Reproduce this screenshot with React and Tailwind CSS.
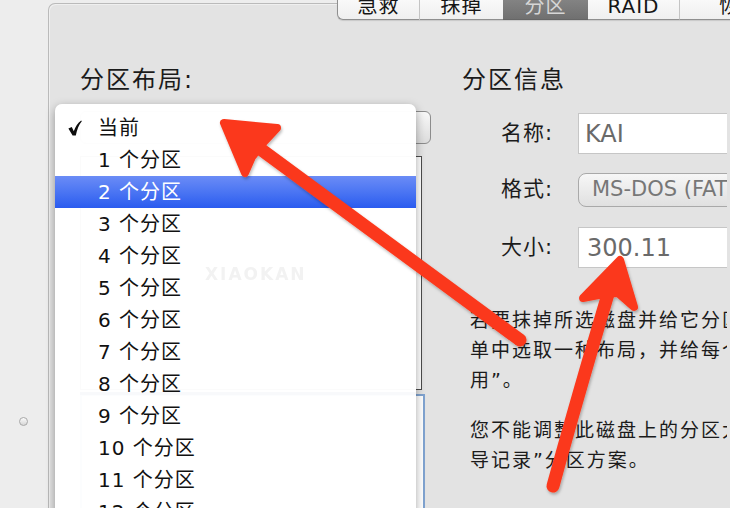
import React from 'react';

const FONT = "font-['DejaVu_Sans','Noto_Sans_CJK_SC',sans-serif]";

const ITEMS = ['当前', '1 个分区', '2 个分区', '3 个分区', '4 个分区', '5 个分区', '6 个分区', '7 个分区', '8 个分区', '9 个分区', '10 个分区', '11 个分区', '12 个分区'];

const TABS = [
    { label: '急救', w: 'w-[83px]' },
    { label: '抹掉', w: 'w-[83px]' },
    { label: '分区', w: 'w-[85px]', active: true },
    { label: 'RAID', w: 'w-[92px]' },
    { label: '恢复', w: 'w-[120px]' },
];

function Check() {
    return (
        <svg width="14" height="16" viewBox="0 0 14 16" className="shrink-0">
            <path d="M0.4 8.6 L3.8 7 L5.8 11.2 C7.4 6.4 9.8 2.8 13.2 0.4 L13.8 1.3 C11 4.6 9 9.6 7.8 15.4 L4.6 15.4 Z" fill="#0d0d0d" />
        </svg>
    );
}

function Arrows() {
    return (
        <svg width="730" height="508" viewBox="0 0 730 508" className="absolute left-0 top-0 pointer-events-none">
            <defs>
                <filter id="sh" x="-10%" y="-10%" width="120%" height="120%">
                    <feDropShadow dx="1" dy="2" stdDeviation="1.5" floodColor="#000" floodOpacity="0.28" />
                </filter>
            </defs>
            <g filter="url(#sh)" fill="#fb391c" stroke="#fb391c" strokeLinejoin="round" strokeLinecap="round">
                {/* arrow to 当前 */}
                <line x1="520" y1="340" x2="240" y2="134" strokeWidth="13" />
                <polygon points="224,123 277,128 263,143 252,157 245,173" strokeWidth="8" />
                {/* arrow to 300.11 */}
                <path d="M553 486 Q 578 395 611 284" fill="none" strokeWidth="13" />
                <polygon points="620,260 634,307 618,293 604,294 583,298" strokeWidth="8" />
            </g>
        </svg>
    );
}

export default function App() {
    return (
        <div className={`relative w-[730px] h-[508px] overflow-hidden bg-[#ededed] text-[#1b1b1b] ${FONT}`}>
            <div className="flex h-full">
                {/* left strip */}
                <div className="w-[48px] shrink-0 flex flex-col items-center pt-[417px]">
                    <div className="-ml-[2px] w-[9px] h-[9px] rounded-full border border-[#a8a8a8] bg-gradient-to-b from-[#fbfbfb] to-[#d6d6d6]" />
                </div>

                {/* main panel */}
                <div className="flex-1 mt-[3px] border-l border-t border-[#bababa] rounded-tl-[7px] bg-[#e3e3e3] shadow-[inset_1px_1px_0_#efefef]">
                    {/* tabs */}
                    <div className="flex ml-[288px] -mt-[16px] h-[32px] shadow-[0_1px_1px_rgba(0,0,0,0.12)] rounded-bl-[6px] w-max">
                        {TABS.map((t, i) => (
                            <div key={t.label}
                                className={`${t.w} h-full flex items-center justify-center pt-[4px] text-[20px] tracking-[1px] border-y border-[#8f8f8f] ${i === 0 ? 'border-l rounded-bl-[6px]' : ''} ${i < TABS.length - 1 && !t.active && !TABS[i + 1].active ? 'border-r border-r-[#c4c4c4]' : ''} ${t.active ? 'bg-gradient-to-b from-[#8e8e8e] to-[#707070] text-[#d6d6d6] border-[#666]' : 'bg-gradient-to-b from-[#ffffff] to-[#efefef] text-[#151515]'}`}>
                                {t.label}
                            </div>
                        ))}
                    </div>

                    <div className="flex mt-[45px]">
                        {/* left column */}
                        <div className="w-[382px] pl-[31px] flex flex-col">
                            <div className="text-[24px] leading-[30px] tracking-[2px] h-[30px]">分区布局:</div>
                            <div className="mt-[16px] h-[33px] rounded-[6px] border border-[#8c8c8c] bg-gradient-to-b from-[#f8f8f8] to-[#dcdcdc]" />
                            <div className="mt-[12px] h-[234px] w-[342px] border border-[#4d4d4d] bg-white" />
                            <div className="mt-[4px] h-[120px] w-[345px] border-2 border-[#7fa3d0] bg-white" />
                        </div>

                        {/* right column */}
                        <div className="ml-[31px] w-[265px] overflow-hidden flex flex-col">
                            <div className="text-[24px] leading-[30px] tracking-[2px] h-[30px]">分区信息</div>

                            <div className="mt-[18px] flex items-center h-[41px]">
                                <div className="w-[116px] shrink-0 text-right pr-[25px] text-[21px] tracking-[1px]">名称:</div>
                                <div className="w-[200px] shrink-0 h-full border border-[#c6c6c6] bg-white flex items-center pl-[6px] text-[24px] text-[#6a6a6a]">KAI</div>
                            </div>

                            <div className="mt-[19px] flex items-center h-[34px]">
                                <div className="w-[116px] shrink-0 text-right pr-[25px] text-[21px] tracking-[1px]">格式:</div>
                                <div className="w-[200px] shrink-0 h-full rounded-[8px] border border-[#a9a9a9] bg-gradient-to-b from-[#f7f7f7] to-[#e0e0e0] flex items-center pl-[13px] text-[21px] text-[#777] whitespace-nowrap">MS-DOS (FAT32)</div>
                            </div>

                            <div className="mt-[20px] flex items-center h-[41px]">
                                <div className="w-[116px] shrink-0 text-right pr-[25px] text-[21px] tracking-[1px]">大小:</div>
                                <div className="w-[200px] shrink-0 h-full border border-[#c6c6c6] bg-white flex items-center pl-[8px] text-[24px] text-[#6a6a6a]">300.11</div>
                            </div>

                            <div className="mt-[37px] pl-[8px] text-[19px] leading-[30px] tracking-[2px] whitespace-nowrap">
                                <p>若要抹掉所选磁盘并给它分区，请从“分区布局”弹出式菜</p>
                                <p>单中选取一种布局，并给每个分区设定选项，然后点按“应</p>
                                <p>用”。</p>
                            </div>
                            <div className="mt-[20px] pl-[8px] text-[19px] leading-[30px] tracking-[2px] whitespace-nowrap">
                                <p>您不能调整此磁盘上的分区大小，因为它使用“主引</p>
                                <p>导记录”分区方案。</p>
                            </div>
                        </div>
                    </div>
                </div>

                <div className="w-[3px] shrink-0 bg-[#efefef]" />
            </div>

            {/* popup menu */}
            <div className="absolute left-[55px] top-[104px] w-[361px] h-[420px] rounded-t-[7px] bg-white/[0.98] shadow-[0_3px_10px_rgba(0,0,0,0.35)] pt-[8px]">
                <div className="absolute left-[150px] top-[158px] text-[17px] font-bold tracking-[2px] text-[#f2f2f2] blur-[0.6px]">XIAOKAN</div>
                <div className="absolute left-[25px] right-0 top-[288px] h-[3px] bg-[#f8f9fb]" />
                {ITEMS.map((it, i) => (
                    <div key={it}
                        className={`relative h-[32px] flex items-center text-[20px] tracking-[1px] ${i === 2 ? 'bg-gradient-to-b from-[#6b8cf6] to-[#2a5bef] text-white' : 'text-[#111]'}`}>
                        <div className="w-[43px] shrink-0 pl-[13px] flex items-center">
                            {i === 0 && <Check />}
                        </div>
                        <span>{it}</span>
                    </div>
                ))}
            </div>

            <Arrows />
        </div>
    );
}
